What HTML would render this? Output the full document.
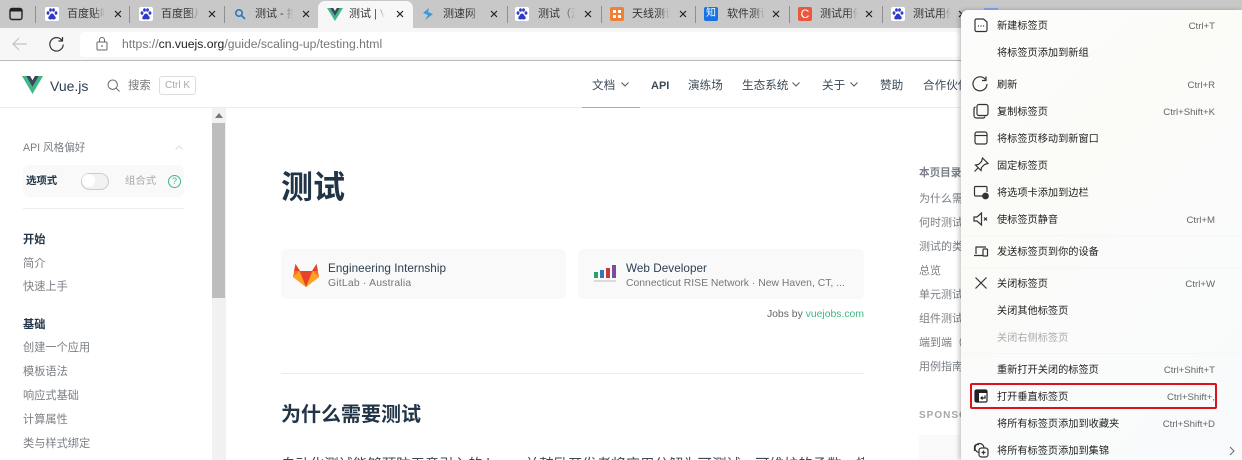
<!DOCTYPE html>
<html lang="zh"><head><meta charset="utf-8"><title>测试 | Vue.js</title>
<style>
html,body{margin:0;padding:0;width:1242px;height:460px;overflow:hidden}
body{background:#fff;font-family:"Liberation Sans","Noto Sans CJK SC",sans-serif;color:#555}
#r{position:absolute;left:0;top:0;width:1242px;height:460px;overflow:hidden}
.a,.t,.m,.s,.l,svg{position:absolute}
.t{white-space:nowrap;overflow:hidden;font-size:11px;line-height:14px;top:7px;color:#333;width:38px;-webkit-mask-image:linear-gradient(90deg,#000 70%,transparent);mask-image:linear-gradient(90deg,#000 70%,transparent)}
.x{position:absolute;top:9px;width:10px;height:10px}
.sep{position:absolute;top:6px;width:1px;height:17px;background:#8f8f8f}
.fav{position:absolute;top:7px;width:14px;height:14px;border-radius:2px;text-align:center;line-height:14px;font-size:10px;color:#fff;overflow:hidden}
.l{white-space:nowrap;font-size:11.2px;line-height:16px;color:#7a7f85;left:23px}
.b{font-weight:bold;color:#213547}
.n{position:absolute;white-space:nowrap;font-size:11.6px;line-height:16px;top:78px;color:#3c4a57}
.m{white-space:nowrap;left:997px;font-size:10.2px;line-height:14px;color:#222}
.s{white-space:nowrap;right:27px;font-size:9.6px;line-height:14px;color:#666;text-align:right}
.ic{left:972px;width:18px;height:18px;fill:none;stroke:#333;stroke-width:1.2}
.o{position:absolute;left:919px;white-space:nowrap;font-size:11px;line-height:14px;color:#7a7f85}
</style></head><body><div id="r">

<!-- tab strip -->
<div class="a" style="left:0;top:0;width:1242px;height:28px;background:#c8c8c8"></div>
<svg style="left:9px;top:7px" width="14" height="14" viewBox="0 0 14 14"><rect x="1" y="1.5" width="12" height="11" rx="2" fill="none" stroke="#222" stroke-width="1.4"/><rect x="1" y="1.5" width="12" height="3" fill="#222"/></svg>
<div class="sep" style="left:35px"></div>
<div class="sep" style="left:129px"></div>
<div class="sep" style="left:224px"></div>
<div class="sep" style="left:507px"></div>
<div class="sep" style="left:601px"></div>
<div class="sep" style="left:695px"></div>
<div class="sep" style="left:789px"></div>
<div class="sep" style="left:882px"></div>

<div class="a" style="left:318px;top:1px;width:95px;height:28px;background:#f7f7f7;border-radius:7px 7px 0 0"></div>

<svg style="left:45px;top:7px" width="14" height="14" viewBox="0 0 14 14"><rect width="14" height="14" rx="2" fill="#fff"/><g fill="#2f3bc4"><ellipse cx="3" cy="6" rx="1.400" ry="1.800"/><ellipse cx="5.500" cy="3" rx="1.400" ry="1.800"/><ellipse cx="8.500" cy="3" rx="1.400" ry="1.800"/><ellipse cx="11" cy="6" rx="1.400" ry="1.800"/><path d="M7 6.500c1.800 0 2 2 3.200 3 1 1 .5 3-1.200 3-.8 0-1.300-.4-2-.4s-1.200.4-2 .4c-1.700 0-2.200-2-1.200-3C5 8.500 5.200 6.500 7 6.500z"/></g></svg>
<div class="t" style="left:67px">百度贴吧</div>
<svg class="x" style="left:113px" viewBox="0 0 10 10"><path d="M2 2l6 6M8 2l-6 6" stroke="#222" stroke-width="1.2"/></svg>
<svg style="left:139px;top:7px" width="14" height="14" viewBox="0 0 14 14"><rect width="14" height="14" rx="2" fill="#fff"/><g fill="#2f3bc4"><ellipse cx="3" cy="6" rx="1.400" ry="1.800"/><ellipse cx="5.500" cy="3" rx="1.400" ry="1.800"/><ellipse cx="8.500" cy="3" rx="1.400" ry="1.800"/><ellipse cx="11" cy="6" rx="1.400" ry="1.800"/><path d="M7 6.500c1.800 0 2 2 3.200 3 1 1 .5 3-1.200 3-.8 0-1.300-.4-2-.4s-1.200.4-2 .4c-1.700 0-2.200-2-1.200-3C5 8.500 5.200 6.500 7 6.500z"/></g></svg>
<div class="t" style="left:161px">百度图片</div>
<svg class="x" style="left:207px" viewBox="0 0 10 10"><path d="M2 2l6 6M8 2l-6 6" stroke="#222" stroke-width="1.2"/></svg>
<svg style="left:234px;top:8px" width="12" height="12" viewBox="0 0 12 12"><circle cx="5" cy="5" r="3.2" fill="none" stroke="#2b78c5" stroke-width="1.6"/><path d="M7.5 7.5L11 11" stroke="#2b78c5" stroke-width="1.6"/></svg>
<div class="t" style="left:255px">测试 - 搜索</div>
<svg class="x" style="left:301px" viewBox="0 0 10 10"><path d="M2 2l6 6M8 2l-6 6" stroke="#222" stroke-width="1.2"/></svg>
<svg style="left:327px;top:8px" width="16" height="13" viewBox="0 0 16 13"><path d="M0 0h3.2L8 8l4.800-8H16L8 13z" fill="#41b883"/><path d="M3.200 0h3L8 3l1.800-3h3L8 8z" fill="#34495e"/></svg>
<div class="t" style="left:349px;width:36px">测试 | Vue.js</div>
<svg class="x" style="left:395px" viewBox="0 0 10 10"><path d="M2 2l6 6M8 2l-6 6" stroke="#222" stroke-width="1.2"/></svg>
<svg style="left:421px;top:7px" width="14" height="14" viewBox="0 0 14 14"><path d="M8 1L2 6l5 2-3 5 8-6-5-2z" fill="#3a9ad9"/></svg>
<div class="t" style="left:443px">测速网 - 专业</div>
<svg class="x" style="left:489px" viewBox="0 0 10 10"><path d="M2 2l6 6M8 2l-6 6" stroke="#222" stroke-width="1.2"/></svg>
<svg style="left:515px;top:7px" width="14" height="14" viewBox="0 0 14 14"><rect width="14" height="14" rx="2" fill="#fff"/><g fill="#2f3bc4"><ellipse cx="3" cy="6" rx="1.400" ry="1.800"/><ellipse cx="5.500" cy="3" rx="1.400" ry="1.800"/><ellipse cx="8.500" cy="3" rx="1.400" ry="1.800"/><ellipse cx="11" cy="6" rx="1.400" ry="1.800"/><path d="M7 6.500c1.800 0 2 2 3.200 3 1 1 .5 3-1.200 3-.8 0-1.300-.4-2-.4s-1.200.4-2 .4c-1.700 0-2.200-2-1.200-3C5 8.500 5.200 6.500 7 6.500z"/></g></svg>
<div class="t" style="left:538px">测试（汉语）</div>
<svg class="x" style="left:583px" viewBox="0 0 10 10"><path d="M2 2l6 6M8 2l-6 6" stroke="#222" stroke-width="1.2"/></svg>
<svg style="left:610px;top:7px" width="14" height="14" viewBox="0 0 14 14"><rect width="14" height="14" rx="2" fill="#f08033"/><path d="M3 3h3v3H3zM8 3h3v3H8zM3 8h3v3H3zM8 8h3v3H8z" fill="#fff"/></svg>
<div class="t" style="left:632px">天线测试方法</div>
<svg class="x" style="left:678px" viewBox="0 0 10 10"><path d="M2 2l6 6M8 2l-6 6" stroke="#222" stroke-width="1.2"/></svg>
<div class="fav" style="left:704px;background:#1772e6">知</div><div class="t" style="left:727px">软件测试用例</div>
<svg class="x" style="left:771px" viewBox="0 0 10 10"><path d="M2 2l6 6M8 2l-6 6" stroke="#222" stroke-width="1.2"/></svg>
<div class="fav" style="left:798px;background:#e9573f;font-size:12px">C</div><div class="t" style="left:820px">测试用例设计</div>
<svg class="x" style="left:864px" viewBox="0 0 10 10"><path d="M2 2l6 6M8 2l-6 6" stroke="#222" stroke-width="1.2"/></svg>
<svg style="left:891px;top:7px" width="14" height="14" viewBox="0 0 14 14"><rect width="14" height="14" rx="2" fill="#fff"/><g fill="#2f3bc4"><ellipse cx="3" cy="6" rx="1.400" ry="1.800"/><ellipse cx="5.500" cy="3" rx="1.400" ry="1.800"/><ellipse cx="8.500" cy="3" rx="1.400" ry="1.800"/><ellipse cx="11" cy="6" rx="1.400" ry="1.800"/><path d="M7 6.500c1.800 0 2 2 3.200 3 1 1 .5 3-1.200 3-.8 0-1.300-.4-2-.4s-1.200.4-2 .4c-1.700 0-2.200-2-1.200-3C5 8.500 5.200 6.500 7 6.500z"/></g></svg>
<div class="t" style="left:913px">测试用例</div>
<svg class="x" style="left:957px" viewBox="0 0 10 10"><path d="M2 2l6 6M8 2l-6 6" stroke="#222" stroke-width="1.2"/></svg>

<!-- toolbar -->
<div class="a" style="left:0;top:28px;width:1242px;height:32px;background:#f7f7f7"></div>
<div class="a" style="left:80px;top:32px;width:880px;height:25px;background:#fff;border-radius:4px"></div>
<div class="a" style="left:0;top:60px;width:1242px;height:1px;background:#b9b9b9"></div>
<svg style="left:11px;top:36px" width="17" height="16" viewBox="0 0 17 16"><path d="M16 8H2M8 2L2 8l6 6" fill="none" stroke="#c4c4c4" stroke-width="1.2"/></svg>
<svg style="left:48px;top:36px" width="17" height="17" viewBox="0 0 17 17"><path d="M14 4.500A6.700 6.700 0 1 0 15.200 8.500M14.500 1v4h-4" fill="none" stroke="#333" stroke-width="1.2"/></svg>
<svg style="left:96px;top:37px" width="12" height="14" viewBox="0 0 12 14"><rect x="1" y="5" width="10" height="8" rx="1" fill="none" stroke="#666"/><path d="M3.500 5V3a2.500 2.500 0 0 1 5 0v2" fill="none" stroke="#666"/><circle cx="6" cy="9" r=".9" fill="#666"/></svg>
<div class="a" style="left:122px;top:36px;font-size:12.2px;line-height:16px;color:#777;white-space:nowrap">https://<span style="color:#222">cn.vuejs.org</span>/guide/scaling-up/testing.html</div>

<!-- nav -->
<div class="a" style="left:0;top:107px;width:1242px;height:1px;background:#ececec"></div>
<svg style="left:22px;top:76px" width="21" height="18" viewBox="0 0 21 18"><path d="M0 0h4.200L10.500 11 16.800 0H21L10.500 18z" fill="#41b883"/><path d="M4.200 0h3.900l2.400 4.200L12.900 0h3.900L10.500 11z" fill="#34495e"/></svg>
<div class="a" style="left:50px;top:77px;font-size:14px;line-height:18px;color:#2c3e50">Vue.js</div>
<svg style="left:107px;top:79px" width="13" height="13" viewBox="0 0 13 13"><circle cx="5.700" cy="5.700" r="4.700" fill="none" stroke="#666"/><path d="M9.200 9.200L12.500 12.500" stroke="#666"/></svg>
<div class="a" style="left:128px;top:78px;font-size:11.4px;line-height:16px;color:#777">搜索</div>
<div class="a" style="left:159px;top:76px;width:35px;height:17px;border:1px solid #ddd;border-radius:3px;font-size:10px;line-height:17px;text-align:center;color:#aaa;white-space:nowrap">Ctrl K</div>
<div class="n" style="left:592px">文档</div>
<svg style="left:621px;top:82px" width="8" height="5" viewBox="0 0 8 5"><path d="M.5.500L4 4 7.500.500" fill="none" stroke="#555"/></svg>
<div class="n" style="left:651px;font-weight:bold;font-size:11px">API</div>
<div class="n" style="left:688px">演练场</div>
<div class="n" style="left:742px">生态系统</div>
<svg style="left:792px;top:82px" width="8" height="5" viewBox="0 0 8 5"><path d="M.5.500L4 4 7.500.500" fill="none" stroke="#555"/></svg>
<div class="n" style="left:822px">关于</div>
<svg style="left:850px;top:82px" width="8" height="5" viewBox="0 0 8 5"><path d="M.5.500L4 4 7.500.500" fill="none" stroke="#555"/></svg>
<div class="n" style="left:880px">赞助</div>
<div class="n" style="left:923px">合作伙伴</div>
<div class="a" style="left:582px;top:107px;width:58px;height:1px;background:#79c8a4"></div>

<!-- sidebar -->
<div class="l" style="top:140px;font-size:10.600px">API 风格偏好</div>
<svg style="left:175px;top:145px" width="8" height="5" viewBox="0 0 8 5"><path d="M.5 4.500L4 1l3.500 3.500" fill="none" stroke="#ddd"/></svg>
<div class="a" style="left:23px;top:165px;width:161px;height:32px;background:#f9f9f9;border-radius:6px"></div>
<div class="l b" style="left:26px;top:174px;font-size:10.400px">选项式</div>
<div class="a" style="left:81px;top:173px;width:26px;height:15px;border:1px solid #ccc;border-radius:9px;background:#f2f2f2"></div>
<div class="a" style="left:82px;top:174px;width:13px;height:13px;border-radius:50%;background:#fff"></div>
<div class="l" style="left:125px;top:174px;font-size:10.400px;color:#aaa">组合式</div>
<div class="a" style="left:168px;top:175px;width:11px;height:11px;border:1px solid #42b883;border-radius:50%;font-size:9px;line-height:11px;text-align:center;color:#42b883">?</div>
<div class="a" style="left:23px;top:208px;width:161px;height:1px;background:#ececec"></div>
<div class="l b" style="top:232px">开始</div>
<div class="l" style="top:256px">简介</div>
<div class="l" style="top:279px">快速上手</div>
<div class="l b" style="top:317px">基础</div>
<div class="l" style="top:340px">创建一个应用</div>
<div class="l" style="top:364px">模板语法</div>
<div class="l" style="top:388px">响应式基础</div>
<div class="l" style="top:412px">计算属性</div>
<div class="l" style="top:436px">类与样式绑定</div>
<div class="a" style="left:212px;top:108px;width:14px;height:352px;background:#f1f1f1"></div>
<div class="a" style="left:212px;top:123px;width:13px;height:175px;background:#bdbdbd"></div>
<svg style="left:215px;top:113px" width="8" height="5" viewBox="0 0 8 5"><path d="M4 0l4 5H0z" fill="#777"/></svg>

<!-- main -->
<div class="a b" style="left:281px;top:165px;font-size:32px;line-height:44px">测试</div>
<div class="a" style="left:281px;top:249px;width:285px;height:50px;background:#f9f9f9;border-radius:6px"></div>
<div class="a" style="left:578px;top:249px;width:286px;height:50px;background:#f9f9f9;border-radius:6px"></div>
<svg style="left:292px;top:260px" width="28" height="28" viewBox="0 0 28 28"><path d="M14 27L1 17l2.500-13L8 11h12l4.500-7L27 17z" fill="#fc6d26"/><path d="M14 27L8 11h12z" fill="#e24329"/><path d="M1 17l6-6 7 16zM27 17l-6-6-7 16z" fill="#fca326"/><path d="M3.500 4L8 11H2zM24.500 4L20 11h6z" fill="#e24329"/></svg>
<div class="a" style="left:328px;top:261px;font-size:11.700px;line-height:16px;color:#2c3e50;white-space:nowrap;letter-spacing:.05px">Engineering Internship</div>
<div class="a" style="left:328px;top:276px;font-size:10.400px;line-height:15px;color:#777;white-space:nowrap;letter-spacing:.2px">GitLab · Australia</div>
<svg style="left:592px;top:262px" width="26" height="22" viewBox="0 0 26 22"><path d="M2 10h4v6H2z" fill="#2e9e6b"/><path d="M8 8h4v8H8z" fill="#2c7cb8"/><path d="M14 6h4v10h-4z" fill="#c8393a"/><path d="M20 3h4v13h-4z" fill="#7a4ba0"/><path d="M2 19h22" stroke="#bbb"/></svg>
<div class="a" style="left:626px;top:261px;font-size:11.700px;line-height:16px;color:#2c3e50;white-space:nowrap;letter-spacing:.05px">Web Developer</div>
<div class="a" style="left:626px;top:276px;font-size:10.400px;line-height:15px;color:#777;white-space:nowrap">Connecticut RISE Network · New Haven, CT, ...</div>
<div class="a" style="right:378px;top:307px;font-size:10.400px;line-height:16px;color:#666;white-space:nowrap">Jobs by <span style="color:#42b883">vuejobs.com</span></div>
<div class="a" style="left:281px;top:373px;width:583px;height:1px;background:#ececec"></div>
<div class="a b" style="left:281px;top:401px;font-size:20px;line-height:28px">为什么需要测试</div>
<div class="a" style="left:281px;top:455px;font-size:14.400px;line-height:20px;color:#3c4a57;white-space:nowrap;width:583px;overflow:hidden">自动化测试能够预防无意引入的 bug，并鼓励开发者将应用分解为可测试、可维护的函数、模块</div>

<!-- outline -->
<div class="o b" style="top:166px;font-size:10.600px">本页目录</div>
<div class="o" style="top:192px">为什么需要测试</div>
<div class="o" style="top:216px">何时测试</div>
<div class="o" style="top:240px">测试的类型</div>
<div class="o" style="top:264px">总览</div>
<div class="o" style="top:288px">单元测试</div>
<div class="o" style="top:312px">组件测试</div>
<div class="o" style="top:336px">端到端（E2E）</div>
<div class="o" style="top:360px">用例指南</div>
<div class="o" style="top:409px;font-size:10px;letter-spacing:1px;color:#a8a8a8;font-weight:bold">SPONSORS</div>
<div class="a" style="left:919px;top:435px;width:60px;height:25px;background:#f9f9f9"></div>

<!-- context menu -->
<div class="a" style="left:961px;top:10px;width:281px;height:450px;background:linear-gradient(135deg,#fcfcfc 0%,#fbfbf8 35%,#fafbfb 70%,#f8fafb 100%);box-shadow:-2px 0 5px rgba(0,0,0,.22);border-radius:7px 0 0 0"></div>
<div class="a" style="left:984px;top:8px;width:14px;height:2px;background:#7a9be0"></div>

<svg class="ic" style="top:16px" viewBox="0 0 18 18"><path d="M3 6V4.500A1.500 1.500 0 0 1 4.500 3h7L15 6v8a1.500 1.500 0 0 1-1.500 1.500h-9A1.500 1.500 0 0 1 3 14z"/><path d="M6 10h.9M8.600 10h.9M11.200 10h.9" stroke-width="1.400"/></svg>
<div class="m" style="top:20px">新建标签页</div><div class="s" style="top:20px">Ctrl+T</div>
<div class="m" style="top:47px">将标签页添加到新组</div>

<svg class="ic" style="left:971px;top:75px" viewBox="0 0 18 18"><path d="M14.500 4.500A7 7 0 1 0 16 9M15 1.500v4h-4" stroke-width="1.200"/></svg>
<div class="m" style="top:79px">刷新</div><div class="s" style="top:79px">Ctrl+R</div>
<svg class="ic" style="top:102px" viewBox="0 0 18 18"><rect x="5" y="2.500" width="11" height="11" rx="2"/><path d="M3.500 5A2 2 0 0 0 2 7v6.500A2.500 2.500 0 0 0 4.500 16H11a2 2 0 0 0 2-1.500"/></svg>
<div class="m" style="top:106px">复制标签页</div><div class="s" style="top:106px">Ctrl+Shift+K</div>
<svg class="ic" style="top:129px" viewBox="0 0 18 18"><rect x="3" y="3" width="12" height="12" rx="2"/><path d="M3 6.500h12"/></svg>
<div class="m" style="top:133px">将标签页移动到新窗口</div>
<svg class="ic" style="top:156px" viewBox="0 0 18 18"><path d="M10.500 2L16 7.500l-3.500 1-3 3-.5 3L3.500 9l3-.5 3-3zM6 12l-3.500 3.500"/></svg>
<div class="m" style="top:160px">固定标签页</div>
<svg class="ic" style="top:183px" viewBox="0 0 18 18"><path d="M12 13H3.500A1 1 0 0 1 2.500 12V4.500A1 1 0 0 1 3.500 3.500H14a1 1 0 0 1 1 1V9"/><circle cx="13.500" cy="13" r="2.800" fill="#333"/></svg>
<div class="m" style="top:187px">将选项卡添加到边栏</div>
<svg class="ic" style="top:210px" viewBox="0 0 18 18"><path d="M2 7v4h3l4.500 4V3L5 7zM12 7.500l3 3M15 7.500l-3 3"/></svg>
<div class="m" style="top:214px">使标签页静音</div><div class="s" style="top:214px">Ctrl+M</div>
<div class="a" style="left:961px;top:235px;width:281px;height:1px;background:#f6f6f6"></div>
<svg class="ic" style="top:242px" viewBox="0 0 18 18"><path d="M4 12V5h10M2 13.500h8.500"/><rect x="11" y="7" width="4.500" height="7" rx=".8"/></svg>
<div class="m" style="top:246px">发送标签页到你的设备</div>
<div class="a" style="left:961px;top:267px;width:281px;height:1px;background:#f6f6f6"></div>
<svg class="ic" style="top:274px" viewBox="0 0 18 18"><path d="M3.500 3.500l11 11M14.500 3.500l-11 11"/></svg>
<div class="m" style="top:278px">关闭标签页</div><div class="s" style="top:278px">Ctrl+W</div>
<div class="m" style="top:305px">关闭其他标签页</div>
<div class="m" style="top:332px;color:#aaa">关闭右侧标签页</div>
<div class="a" style="left:961px;top:353px;width:281px;height:1px;background:#f6f6f6"></div>
<div class="m" style="top:364px">重新打开关闭的标签页</div><div class="s" style="top:364px">Ctrl+Shift+T</div>
<svg class="ic" style="top:387px" viewBox="0 0 18 18"><rect x="3" y="3" width="12" height="12" rx="1.500" fill="#fff" stroke="#222"/><path d="M3 3h12v3H7v9H3z" fill="#222" stroke="none"/><path d="M13 8.500v2.500H9M10.500 9.500L9 11l1.500 1.500" stroke="#222"/></svg>
<div class="m" style="top:391px">打开垂直标签页</div><div class="s" style="top:391px">Ctrl+Shift+,</div>
<div class="m" style="top:418px">将所有标签页添加到收藏夹</div><div class="s" style="top:418px">Ctrl+Shift+D</div>
<svg class="ic" style="top:441px" viewBox="0 0 18 18"><path d="M7 3.500H5A2.500 2.500 0 0 0 2.500 6v4"/><circle cx="7.500" cy="7" r="4.500"/><rect x="7" y="7" width="9" height="9" rx="2.500" fill="#fcfcfc"/><path d="M11.500 9.500v4M9.500 11.500h4"/></svg>
<div class="m" style="top:445px">将所有标签页添加到集锦</div>
<svg style="left:1229px;top:446px" width="7" height="10" viewBox="0 0 7 10"><path d="M1 1l4 4-4 4" fill="none" stroke="#666"/></svg>
<div class="a" style="left:970px;top:383px;width:243px;height:22px;border:2px solid #d8141a;border-radius:2px"></div>

</div></body></html>
